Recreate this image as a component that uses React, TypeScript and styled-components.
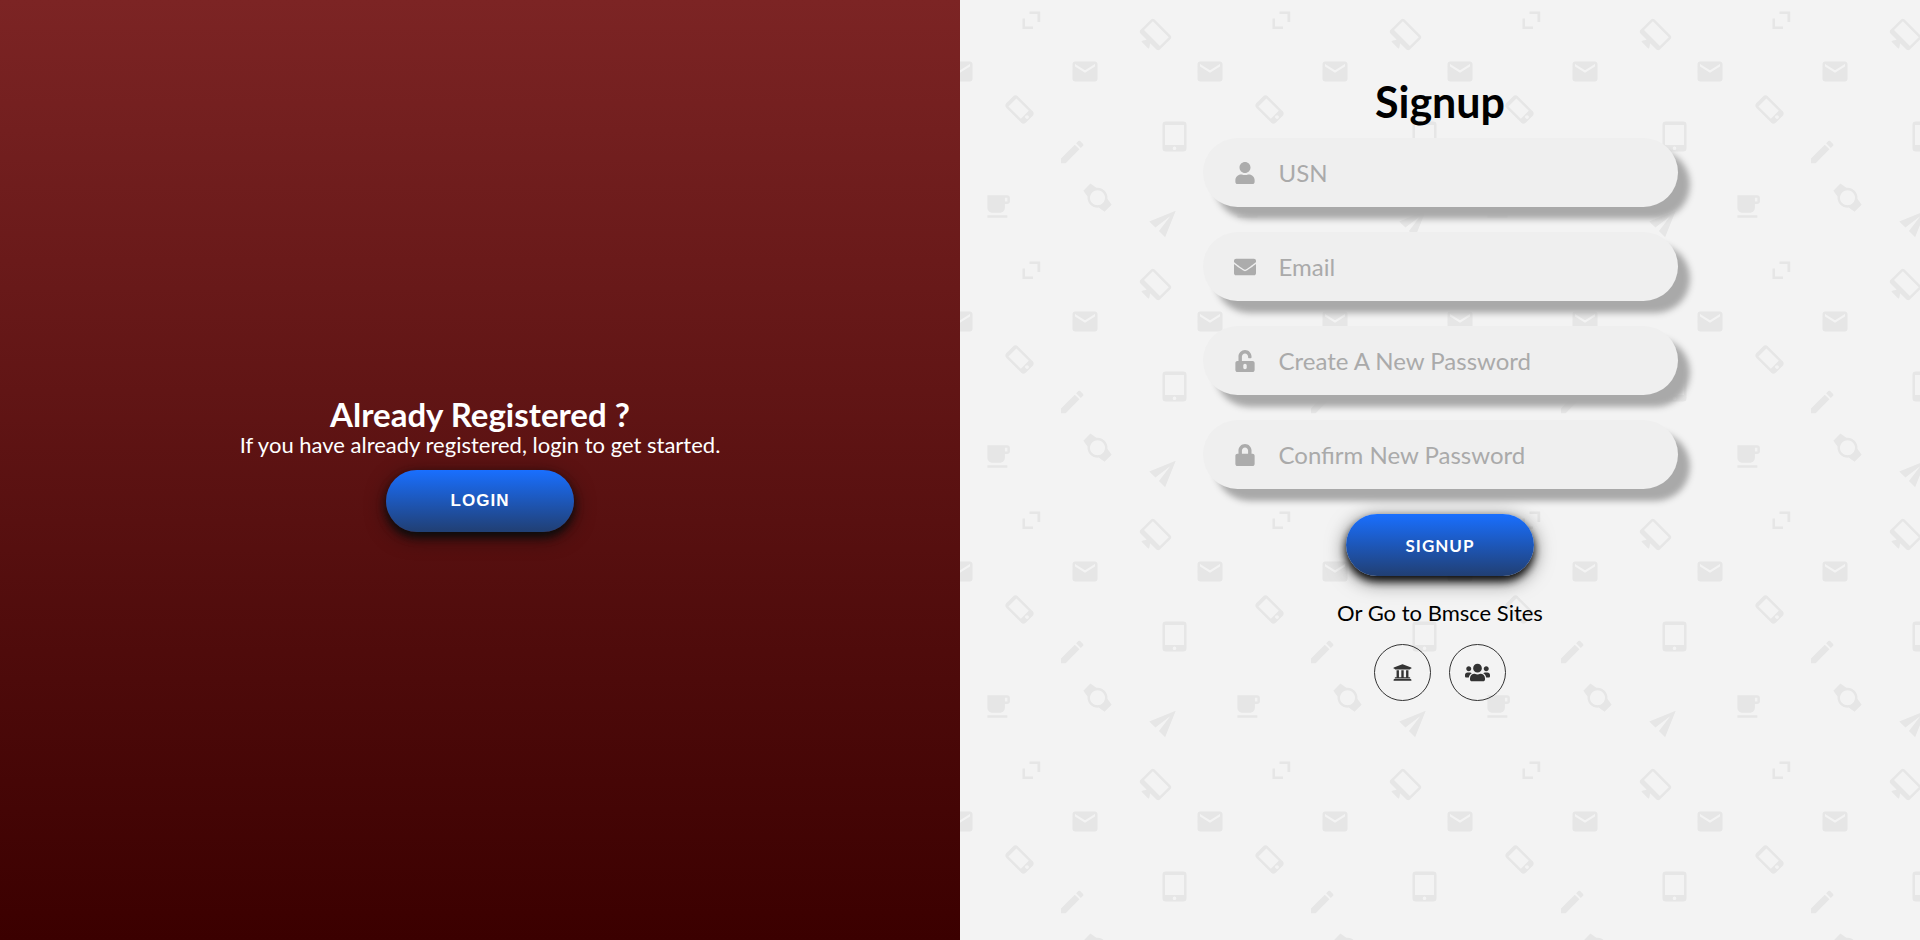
import React from 'react';
import styled, { createGlobalStyle } from 'styled-components';
import { FaEnvelope, FaLock, FaUniversity, FaUnlockAlt, FaUser, FaUsers } from 'react-icons/fa';

/* Repeating 250px tile of office and device icons behind the form. */
const patternTile = `
<svg xmlns="http://www.w3.org/2000/svg" width="250" height="250" viewBox="0 0 250 250">
  <defs>
    <path id="mail" d="M20 4H4c-1.1 0-2 .9-2 2v12c0 1.1.9 2 2 2h16c1.1 0 2-.9 2-2V6c0-1.1-.9-2-2-2zm0 4l-8 5-8-5V6l8 5 8-5v2z"/>
  </defs>
  <g fill="#e6e6e6">
    <path d="M69.5 11.5H80.2V22H77.5V14H69.5zM62.5 18.5H65V26.5H73V29H62.5z"/>
    <path transform="translate(195.5 34.5) rotate(45) scale(1.25) translate(-12 -10)" d="M21 2H3c-1.1 0-2 .9-2 2v12c0 1.1.9 2 2 2h7l-2 3v1h8v-1l-2-3h7c1.1 0 2-.9 2-2V4c0-1.1-.9-2-2-2zm0 12H3V4h18v10z"/>
    <use href="#mail" transform="translate(-15 56.5) scale(1.25)"/>
    <use href="#mail" transform="translate(110 56.5) scale(1.25)"/>
    <use href="#mail" transform="translate(235 56.5) scale(1.25)"/>
    <path transform="translate(59.5 109.5) rotate(-45) scale(1.25) translate(-11.5 -12)" d="M15.5 1h-8C6.12 1 5 2.12 5 3.5v17C5 21.88 6.12 23 7.5 23h8c1.38 0 2.5-1.12 2.5-2.5v-17C18 2.12 16.88 1 15.5 1zm-4 21c-.83 0-1.5-.67-1.5-1.5s.67-1.5 1.5-1.5 1.5.67 1.5 1.5-.67 1.5-1.5 1.5zm4.5-4H7V4h9v14z"/>
    <path fill-rule="evenodd" d="M205.5 121.5h18a3 3 0 0 1 3 3v24a3 3 0 0 1-3 3h-18a3 3 0 0 1-3-3v-24a3 3 0 0 1 3-3zM205 125v20h19v-20zM214.5 146.5a1.8 1.8 0 1 0 .01 0z"/>
    <path transform="translate(97.2 136.9) scale(1.25)" d="M3 17.25V21h3.75L17.81 9.94l-3.75-3.75L3 17.25zM20.71 7.04c.39-.39.39-1.02 0-1.41l-2.34-2.34c-.39-.39-1.02-.39-1.41 0l-1.83 1.83 3.75 3.75 1.83-1.83z"/>
    <path transform="translate(22.4 191.4) scale(1.25)" d="M20 3H4v10c0 2.21 1.79 4 4 4h6c2.21 0 4-1.79 4-4v-3h2c1.11 0 2-.89 2-2V5c0-1.11-.89-2-2-2zm0 5h-2V5h2v3zM4 19h16v2H4z"/>
    <path transform="translate(137.5 197.7) rotate(-45) scale(1.25) translate(-12 -12)" d="M20 12c0-2.54-1.19-4.81-3.04-6.27L16 0H8l-.95 5.73C5.19 7.19 4 9.45 4 12s1.19 4.81 3.05 6.27L8 24h8l.96-5.73C18.81 16.81 20 14.54 20 12zM6 12c0-3.31 2.69-6 6-6s6 2.69 6 6-2.69 6-6 6-6-2.69-6-6z"/>
    <path transform="translate(206 220.5) rotate(-45) scale(1.25) translate(-12 -12)" d="M2.01 21L23 12 2.01 3 2 10l15 2-15 2z"/>
  </g>
</svg>`;

const GlobalStyle = createGlobalStyle`
  *, *::before, *::after {
    box-sizing: border-box;
  }

  body {
    margin: 0;
    font-family: Lato, "Liberation Sans", sans-serif;
  }

  h1, h2, p {
    margin: 0;
  }
`;

const Page = styled.main`
  display: grid;
  grid-template-columns: 1fr 1fr;
  min-height: 100vh;
`;

const Panel = styled.section`
  display: flex;
  flex-direction: column;
  align-items: center;
`;

const LoginPanel = styled(Panel)`
  justify-content: center;
  padding: 0 24px 12px;
  color: #fff;
  text-align: center;
  background: linear-gradient(#7c2424, #3b0000);
`;

const SignupPanel = styled(Panel)`
  padding: 78px 24px 40px;
  background: #f3f3f3 url("data:image/svg+xml,${encodeURIComponent(patternTile)}") 0 0 / 250px 250px;
`;

const LoginTitle = styled.h2`
  font-size: 33px;
  line-height: 36px;
  font-weight: 700;
`;

const LoginText = styled.p`
  margin-bottom: 12px;
  font-size: 22px;
  line-height: 26px;
`;

const SignupTitle = styled.h1`
  margin-bottom: 12px;
  font-size: 43px;
  line-height: 48px;
  font-weight: 700;
  color: #000;
`;

const PillButton = styled.button<{ $font?: string }>`
  width: 188px;
  height: 62px;
  border: 0;
  border-radius: 31px;
  background: linear-gradient(#196fff, #213f73);
  box-shadow: 0 5px 8px #0c0c0c, 0 5px 20px rgba(12, 12, 12, 0.6);
  color: #fff;
  font-family: ${({ $font }) => $font ?? 'inherit'};
  font-size: 17px;
  font-weight: 700;
  letter-spacing: 1px;
  text-transform: uppercase;
  cursor: pointer;
`;

const Form = styled.form`
  display: flex;
  flex-direction: column;
  align-items: center;
  gap: 25px;
  width: 100%;
  max-width: 475px;
`;

const Field = styled.label`
  display: grid;
  grid-template-columns: 68px 1fr;
  align-items: center;
  width: 100%;
  height: 69px;
  padding: 0 28px 0 8px;
  border-radius: 35px;
  background: #efefef;
  box-shadow: 12px 12px 6px #a9a9a9;
  color: #acacac;
  font-size: 22px;

  svg {
    justify-self: center;
  }
`;

const FieldInput = styled.input`
  width: 100%;
  padding: 0;
  border: 0;
  outline: 0;
  background: none;
  color: #333;
  font: inherit;
  font-size: 24px;
  line-height: 30px;

  &::placeholder {
    color: #aaa;
    opacity: 1;
  }
`;

const SitesText = styled.p`
  margin: 24px 0 18px;
  font-size: 22px;
  line-height: 26px;
  color: #000;
`;

const Sites = styled.nav`
  display: flex;
  gap: 18px;
`;

const SiteLink = styled.a`
  display: grid;
  place-items: center;
  width: 57px;
  height: 57px;
  border: 1px solid #333;
  border-radius: 50%;
  color: #333;
`;

const fields = [
  { name: 'usn', type: 'text', label: 'USN', Icon: FaUser },
  { name: 'email', type: 'email', label: 'Email', Icon: FaEnvelope },
  { name: 'password', type: 'password', label: 'Create A New Password', Icon: FaUnlockAlt },
  { name: 'confirm', type: 'password', label: 'Confirm New Password', Icon: FaLock },
];

export default function App() {
  return (
    <>
      <GlobalStyle />
      <Page>
        <LoginPanel>
          <LoginTitle>Already Registered ?</LoginTitle>
          <LoginText>If you have already registered, login to get started.</LoginText>
          <PillButton type="button" $font='"Liberation Sans", Arial, sans-serif'>Login</PillButton>
        </LoginPanel>
        <SignupPanel>
          <SignupTitle>Signup</SignupTitle>
          <Form onSubmit={(event) => event.preventDefault()}>
            {fields.map(({ name, type, label, Icon }) => (
              <Field key={name}>
                <Icon aria-hidden />
                <FieldInput name={name} type={type} placeholder={label} aria-label={label} />
              </Field>
            ))}
            <PillButton type="submit">Signup</PillButton>
          </Form>
          <SitesText>Or Go to Bmsce Sites</SitesText>
          <Sites aria-label="Bmsce sites">
            <SiteLink href="#college" aria-label="College"><FaUniversity size={19} aria-hidden /></SiteLink>
            <SiteLink href="#community" aria-label="Community"><FaUsers size={25} aria-hidden /></SiteLink>
          </Sites>
        </SignupPanel>
      </Page>
    </>
  );
}
